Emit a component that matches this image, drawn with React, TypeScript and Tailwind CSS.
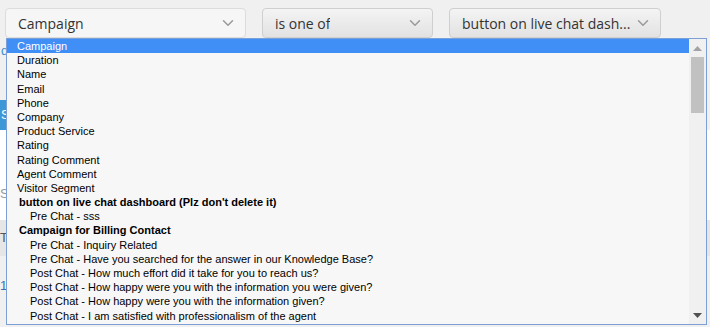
import { ChevronDown } from "lucide-react";

const rows: { label: string; kind: "opt" | "group" | "child"; active?: boolean }[] = [
  { label: "Campaign", kind: "opt", active: true },
  { label: "Duration", kind: "opt" },
  { label: "Name", kind: "opt" },
  { label: "Email", kind: "opt" },
  { label: "Phone", kind: "opt" },
  { label: "Company", kind: "opt" },
  { label: "Product Service", kind: "opt" },
  { label: "Rating", kind: "opt" },
  { label: "Rating Comment", kind: "opt" },
  { label: "Agent Comment", kind: "opt" },
  { label: "Visitor Segment", kind: "opt" },
  { label: "button on live chat dashboard (Plz don't delete it)", kind: "group" },
  { label: "Pre Chat - sss", kind: "child" },
  { label: "Campaign for Billing Contact", kind: "group" },
  { label: "Pre Chat - Inquiry Related", kind: "child" },
  { label: "Pre Chat - Have you searched for the answer in our Knowledge Base?", kind: "child" },
  { label: "Post Chat - How much effort did it take for you to reach us?", kind: "child" },
  { label: "Post Chat - How happy were you with the information you were given?", kind: "child" },
  { label: "Post Chat - How happy were you with the information given?", kind: "child" },
  { label: "Post Chat - I am satisfied with professionalism of the agent", kind: "child" },
];

const Select = ({ label, width, flat }: { label: string; width: string; flat?: boolean }) => (
  <div
    className={`${width} h-[30px] flex items-center justify-between rounded-[4px] border pl-[12px] pr-[8px] ${
      flat
        ? "bg-[#f6f6f6] border-[#dcdcdc]"
        : "bg-gradient-to-b from-[#f4f4f4] to-[#e2e2e2] border-[#cfcfcf]"
    }`}
  >
    <span className="text-[14px] text-[#333] truncate">{label}</span>
    <ChevronDown size={18} strokeWidth={2} className="text-[#9a9a9a] shrink-0" />
  </div>
);

const App = () => {
  return (
    <div className="relative w-[710px] h-[327px] overflow-hidden bg-[#f0f0f0] font-['Open_Sans',sans-serif]">
      <div className="flex gap-[16px] pt-[8px] pl-[5px]">
        <Select label="Campaign" width="w-[241px]" flat />
        <Select label="is one of" width="w-[171px]" />
        <Select label="button on live chat dash..." width="w-[212px]" />
      </div>

      {/* page content behind the dropdown */}
      <div className="flex flex-col text-[13px] font-['Liberation_Sans',sans-serif]">
        <div className="h-[22px] mt-[2px] pl-[1px] text-[#3a8fd0] leading-[22px]">d</div>
        <div className="h-[38px]" />
        <div className="h-[30px] w-[40px] bg-[#3d97d6] text-white pl-[1px] leading-[30px]">S</div>
        <div className="h-[52px] bg-white" />
        <div className="h-[24px] bg-white text-[#999] leading-[24px]">Se</div>
        <div className="h-[14px] bg-white" />
        <div className="h-[36px] bg-[#e6e6e6] text-[#555] leading-[36px]">Ti</div>
        <div className="h-[20px]" />
        <div className="h-[20px] text-[#3a6fb0] leading-[20px]">1 2</div>
      </div>

      {/* open dropdown list */}
      <div className="absolute left-[6px] top-[38px] w-[701px] h-[287px] border border-[#7b9fd6] bg-[#f7f7f7] flex font-['Liberation_Sans',Arial,sans-serif] text-[11px] text-black">
        <div className="flex-1 overflow-hidden">
          {rows.map((r) => (
            <div
              key={r.label}
              className={`h-[14.2px] leading-[14.2px] whitespace-nowrap ${
                r.active ? "bg-[#3f8ff7] text-white" : ""
              } ${r.kind === "group" ? "pl-[12px] font-bold" : r.kind === "child" ? "pl-[23px]" : "pl-[10px]"}`}
            >
              {r.label}
            </div>
          ))}
        </div>
        <div className="w-[17px] bg-[#f0f0f0] flex flex-col items-center">
          <div className="h-[18px] flex items-center justify-center">
            <svg width="9" height="5" viewBox="0 0 9 5">
              <path d="M0 5 L4.5 0 L9 5 Z" fill="#a3a3a3" />
            </svg>
          </div>
          <div className="w-[13px] h-[56px] bg-[#c1c1c1]" />
          <div className="flex-1" />
          <div className="h-[18px] flex items-center justify-center">
            <svg width="9" height="5" viewBox="0 0 9 5">
              <path d="M0 0 L9 0 L4.5 5 Z" fill="#505050" />
            </svg>
          </div>
        </div>
      </div>
    </div>
  );
};

export default App;
